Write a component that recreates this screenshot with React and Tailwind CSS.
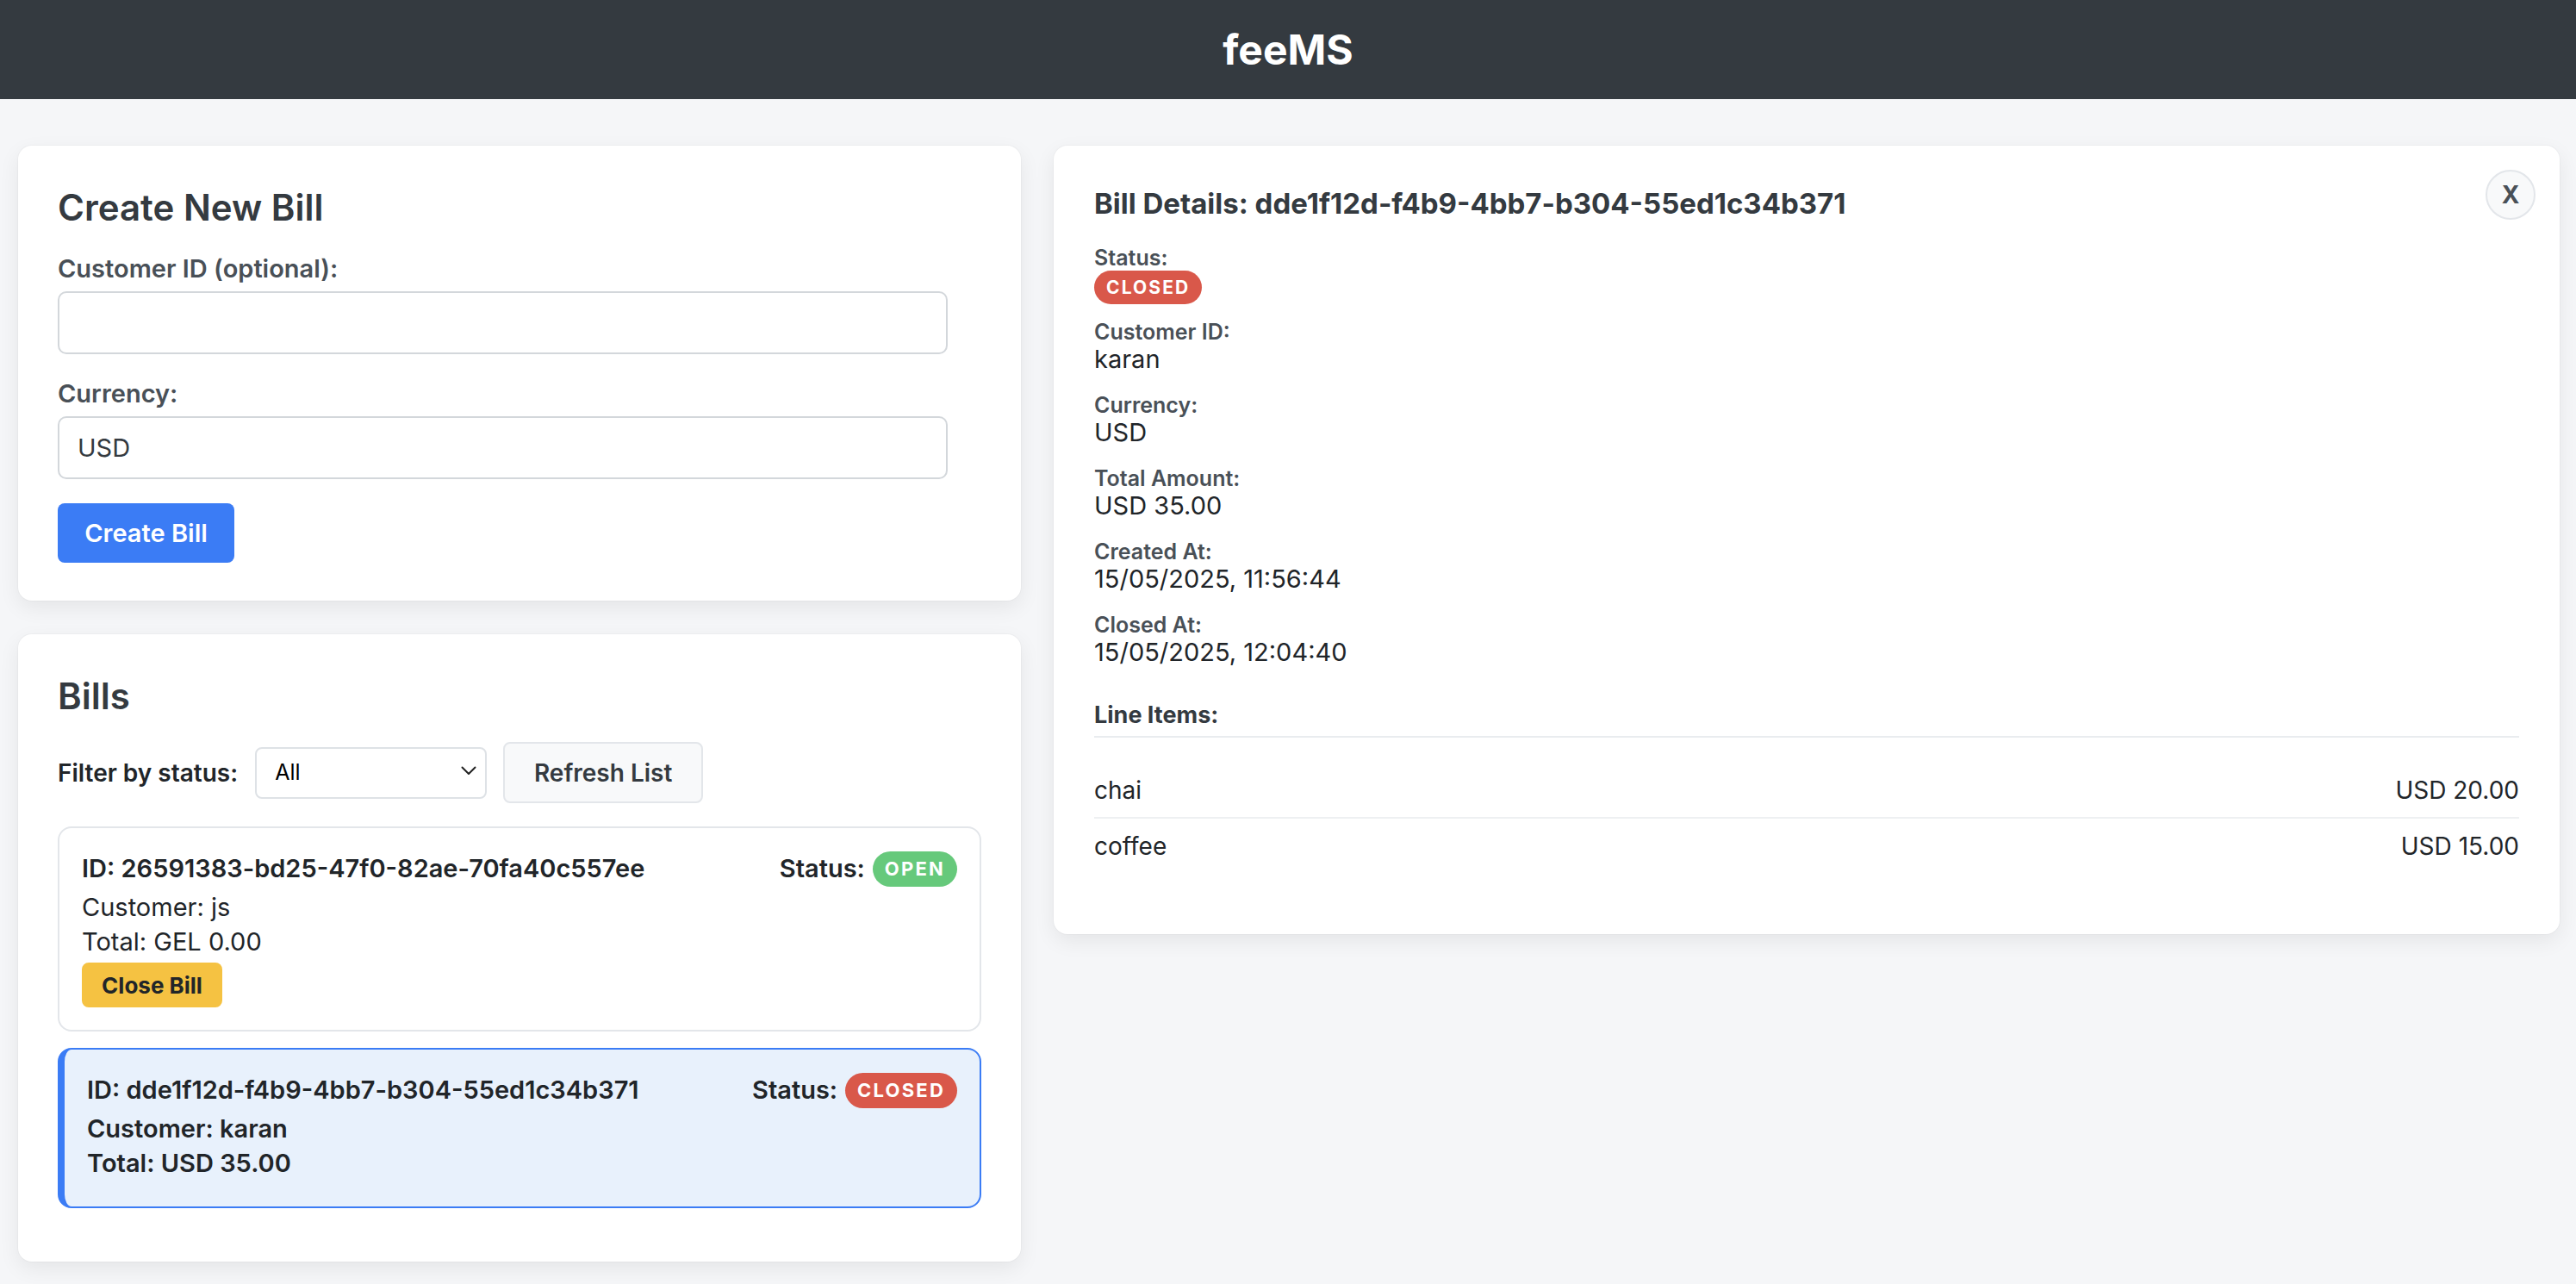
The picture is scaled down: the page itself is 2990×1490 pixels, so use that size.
import React from "react";

const font = "font-['Inter','Noto_Sans','Liberation_Sans',sans-serif]";

function Badge({ status, className = "" }) {
  const open = status === "open";
  return (
    <span
      className={`inline-flex items-center justify-center rounded-full px-[14px] font-bold uppercase tracking-[0.1em] text-white ${
        open ? "bg-[#66c97b]" : "bg-[#d9584a]"
      } ${className}`}
    >
      {status}
    </span>
  );
}

function Field({ label, value }) {
  return (
    <div className="mb-[22px]">
      <div className="text-[25px] leading-[30px] font-semibold text-[#495057]">{label}</div>
      <div className="text-[29px] leading-[33px] text-[#212529]">{value}</div>
    </div>
  );
}

export default function App() {
  return (
    <div className={`min-h-screen bg-[#f5f6f8] ${font}`}>
      <header className="h-[115px] bg-[#343a40] flex items-center justify-center">
        <h1 className="text-[48px] font-bold text-white leading-none">feeMS</h1>
      </header>

      <main className="flex items-start gap-[38px] pl-[21px] pt-[54px] pb-[20px]">
        {/* Left column */}
        <div className="w-[1164px] flex flex-col gap-[39px]">
          {/* Create New Bill */}
          <section className="rounded-[16px] bg-white px-[46px] pt-[47px] pb-[44px] shadow-[0_0_0_1px_rgba(0,0,0,0.025),0_8px_24px_rgba(0,0,0,0.07)]">
            <h2 className="text-[42px] leading-[50px] font-semibold text-[#343a40] mb-[28px]">Create New Bill</h2>
            <label className="block text-[29px] leading-[36px] font-semibold text-[#495057] mb-[8px]">
              Customer ID (optional):
            </label>
            <input
              className="block w-[1033px] h-[73px] rounded-[10px] border-2 border-[#d3d7db] bg-white px-[21px] text-[29px] text-[#343a40] outline-none"
              defaultValue=""
            />
            <label className="block mt-[28px] text-[29px] leading-[36px] font-semibold text-[#495057] mb-[8px]">
              Currency:
            </label>
            <input
              className="block w-[1033px] h-[73px] rounded-[10px] border-2 border-[#d3d7db] bg-white px-[21px] text-[29px] text-[#343a40] outline-none"
              defaultValue="USD"
            />
            <button className="mt-[28px] w-[205px] h-[69px] rounded-[8px] bg-[#3b7cf5] text-white text-[29px] font-semibold">
              Create Bill
            </button>
          </section>

          {/* Bills */}
          <section className="rounded-[16px] bg-white px-[46px] pt-[47px] pb-[62px] shadow-[0_0_0_1px_rgba(0,0,0,0.025),0_8px_24px_rgba(0,0,0,0.07)]">
            <h2 className="text-[42px] leading-[50px] font-semibold text-[#343a40] mb-[28px]">Bills</h2>
            <div className="flex items-center">
              <span className="text-[28px] font-semibold text-[#212529]">Filter by status:</span>
              <div className="relative ml-[20px]">
                <select className="appearance-none w-[269px] h-[60px] rounded-[8px] border-2 border-[#dee2e6] bg-white pl-[21px] text-[25px] text-black outline-none">
                  <option>All</option>
                </select>
                <svg
                  className="pointer-events-none absolute right-[12px] top-[22px]"
                  width="18"
                  height="11"
                  viewBox="0 0 18 11"
                  fill="none"
                >
                  <path d="M1.5 1.5 L9 9 L16.5 1.5" stroke="#222" strokeWidth="2" strokeLinecap="round" strokeLinejoin="round" />
                </svg>
              </div>
              <button className="ml-[19px] w-[232px] h-[71px] rounded-[8px] border-2 border-[#e3e6ea] bg-[#f8f9fa] text-[28px] font-semibold text-[#343a40]">
                Refresh List
              </button>
            </div>

            <div className="mt-[27px] flex flex-col gap-[19px]">
              <div className="rounded-[16px] border-2 border-[#e3e6ea] bg-white px-[26px] pt-[26px] pb-[26px]">
                <div className="flex h-[42px] items-center justify-between">
                  <span className="text-[29px] font-semibold text-[#212529]">
                    ID: 26591383-bd25-47f0-82ae-70fa40c557ee
                  </span>
                  <span className="flex items-center text-[29px] font-semibold text-[#212529]">
                    Status:
                    <Badge status="open" className="ml-[9px] h-[41px] text-[22px]" />
                  </span>
                </div>
                <div className="mt-[4px] text-[29px] leading-[40px] text-[#212529]">Customer: js</div>
                <div className="text-[29px] leading-[40px] text-[#212529]">Total: GEL 0.00</div>
                <button className="mt-[4px] w-[163px] h-[52px] rounded-[8px] bg-[#f5c242] text-[26px] font-bold text-[#212529]">
                  Close Bill
                </button>
              </div>

              <div className="rounded-[16px] border-2 border-l-[8px] border-[#3b7cf5] bg-[#e8f1fc] pl-[26px] pr-[26px] pt-[26px] pb-[30px]">
                <div className="flex h-[42px] items-center justify-between">
                  <span className="text-[29px] font-semibold text-[#212529]">
                    ID: dde1f12d-f4b9-4bb7-b304-55ed1c34b371
                  </span>
                  <span className="flex items-center text-[29px] font-semibold text-[#212529]">
                    Status:
                    <Badge status="closed" className="ml-[9px] h-[41px] text-[22px]" />
                  </span>
                </div>
                <div className="mt-[4px] text-[29px] leading-[40px] font-semibold text-[#212529]">Customer: karan</div>
                <div className="text-[29px] leading-[40px] font-semibold text-[#212529]">Total: USD 35.00</div>
              </div>
            </div>
          </section>
        </div>

        {/* Right column: Bill details */}
        <section className="relative w-[1748px] rounded-[16px] bg-white px-[47px] pt-[47px] pb-[46px] shadow-[0_0_0_1px_rgba(0,0,0,0.025),0_8px_24px_rgba(0,0,0,0.07)]">
          <button className="absolute right-[28px] top-[28px] flex h-[58px] w-[58px] items-center justify-center rounded-full border-2 border-[#e3e6ea] bg-[#f8f9fa] text-[28px] font-bold text-[#495057]">
            X
          </button>
          <h2 className="text-[33px] leading-[40px] font-bold text-[#343a40] mb-[28px]">
            Bill Details: dde1f12d-f4b9-4bb7-b304-55ed1c34b371
          </h2>

          <div className="mb-[17px]">
            <div className="text-[25px] leading-[30px] font-semibold text-[#495057]">Status:</div>
            <Badge status="closed" className="h-[39px] text-[21px]" />
          </div>
          <Field label="Customer ID:" value="karan" />
          <Field label="Currency:" value="USD" />
          <Field label="Total Amount:" value="USD 35.00" />
          <Field label="Created At:" value="15/05/2025, 11:56:44" />
          <Field label="Closed At:" value="15/05/2025, 12:04:40" />

          <h3 className="mt-[40px] pb-[7px] border-b-2 border-[#e9ecef] text-[27px] leading-[34px] font-bold text-[#343a40]">
            Line Items:
          </h3>
          <ul className="mt-[30px] mb-[24px]">
            <li className="flex h-[64px] items-center justify-between border-b-2 border-[#eef0f2] text-[28px] text-[#212529]">
              <span>chai</span>
              <span>USD 20.00</span>
            </li>
            <li className="flex h-[64px] items-center justify-between text-[28px] text-[#212529]">
              <span>coffee</span>
              <span>USD 15.00</span>
            </li>
          </ul>
        </section>
      </main>
    </div>
  );
}
